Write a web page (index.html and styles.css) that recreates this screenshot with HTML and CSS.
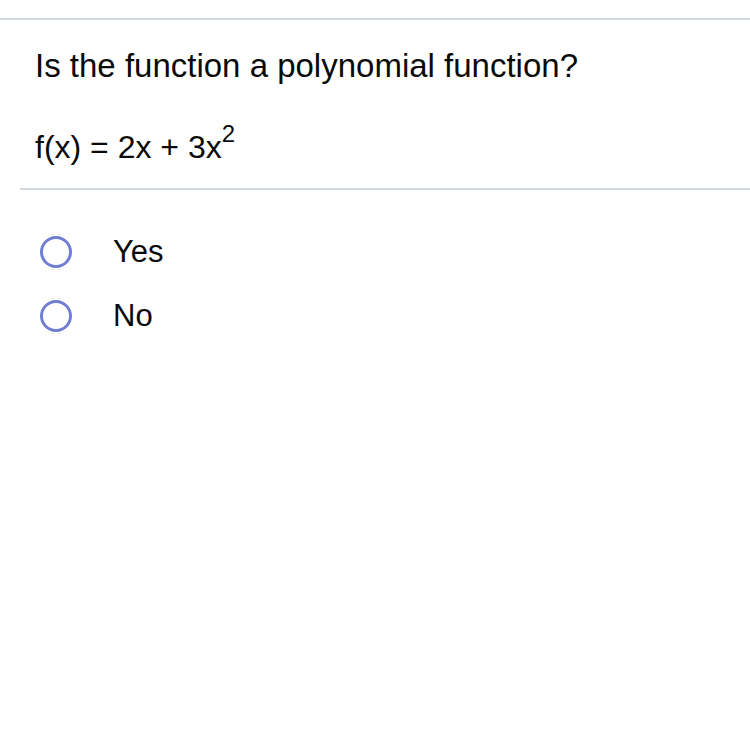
FILE: index.html
```html
<!DOCTYPE html>
<html>
<head>
<meta charset="utf-8">
<link rel="stylesheet" href="styles.css">
</head>
<body>
<div class="rule rule-top"></div>
<div class="question">
  <p class="prompt">Is the function a polynomial function?</p>
  <p class="formula">f(x) = 2x + 3x<span class="sup">2</span></p>
</div>
<div class="rule rule-mid"></div>
<div class="options">
  <label class="option"><span class="radio"></span><span class="label">Yes</span></label>
  <label class="option"><span class="radio"></span><span class="label">No</span></label>
</div>
</body>
</html>
```

FILE: styles.css
```css
html, body {
  margin: 0;
  padding: 0;
  background: #ffffff;
}
body {
  font-family: "Liberation Sans", Arial, sans-serif;
  color: #0a0a0a;
}
.rule {
  height: 2px;
  background: #d0d7dd;
}
.rule-top {
  margin-top: 18px;
}
.question {
  padding-left: 35px;
}
.prompt {
  margin: 27px 0 0 0;
  font-size: 33px;
  line-height: 38px;
}
.formula {
  margin: 44px 0 0 0;
  font-size: 32px;
  line-height: 36px;
}
.sup {
  font-size: 24px;
  line-height: 0;
  vertical-align: 16px;
}
.rule-mid {
  margin-top: 23px;
  margin-left: 20px;
}
.options {
  display: flex;
  flex-direction: column;
  gap: 24px;
  margin-top: 42px;
}
.option {
  display: flex;
  align-items: center;
  height: 40px;
  padding-left: 40px;
  gap: 41px;
}
.radio {
  width: 26px;
  height: 26px;
  border: 3px solid #6f80d6;
  border-radius: 50%;
  flex: none;
}
.label {
  font-size: 31px;
  line-height: 40px;
}
```
